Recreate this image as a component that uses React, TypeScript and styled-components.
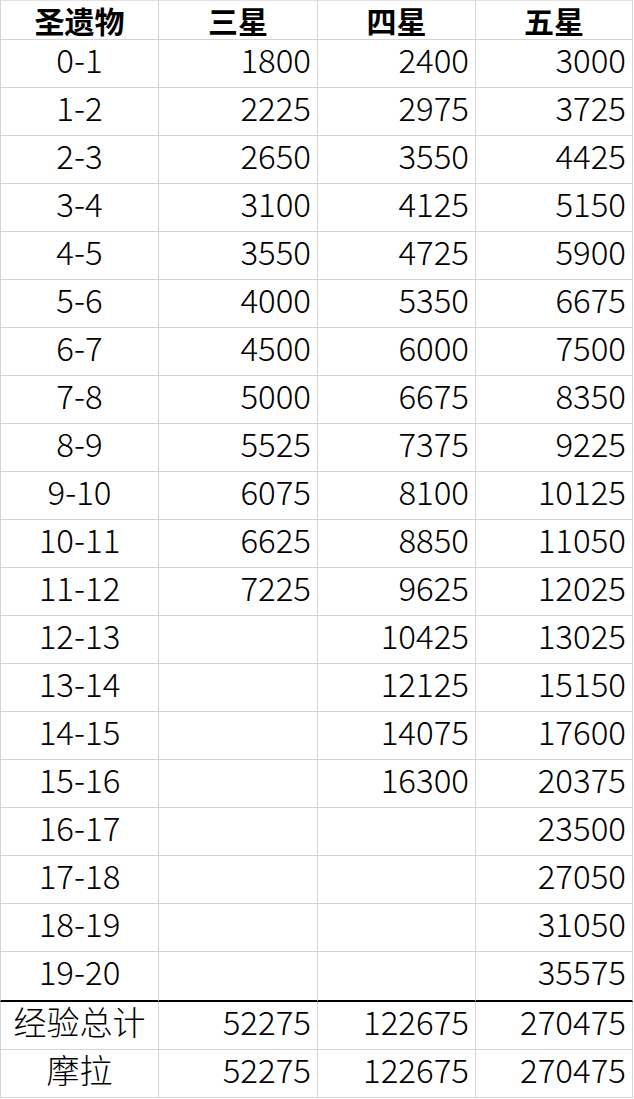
import styled, { createGlobalStyle } from "styled-components";

const GlobalStyle = createGlobalStyle`
  html, body {
    margin: 0;
    padding: 0;
    background: #fff;
  }
  body {
    font-family: "Noto Sans CJK SC", "Noto Sans", sans-serif;
    color: #000;
  }
`;

const Sheet = styled.div`
  display: grid;
  grid-template-columns: 159px 159px 158px 157px;
  width: 634px;
`;

const Cell = styled.div<{ $head?: boolean; $first?: boolean; $edge?: boolean }>`
  box-sizing: border-box;
  height: ${(p) => (p.$head ? 40 : p.$edge ? 50 : 48)}px;
  display: flex;
  align-items: center;
  justify-content: ${(p) => (p.$first || p.$head ? "center" : "flex-end")};
  padding: 0 ${(p) => (p.$first || p.$head ? 0 : 6)}px
    ${(p) => (p.$head ? 0 : p.$edge ? 10 : 8)}px 0;
  border-right: 1px solid #d4d4d4;
  border-left: ${(p) => (p.$first ? "1px solid #d4d4d4" : "none")};
  border-top: ${(p) => (p.$head ? "1px solid #e2e2e2" : "none")};
  border-bottom: ${(p) => (p.$edge ? "2px solid #000" : "1px solid #d4d4d4")};
  font-size: ${(p) => (p.$head ? 30 : 33)}px;
  font-weight: ${(p) => (p.$head ? 700 : 300)};
  line-height: ${(p) => (p.$head ? 1.2 : 1)};
  white-space: nowrap;
`;

const heads = ["圣遗物", "三星", "四星", "五星"];

const rows: [string, string, string, string][] = [
  ["0-1", "1800", "2400", "3000"],
  ["1-2", "2225", "2975", "3725"],
  ["2-3", "2650", "3550", "4425"],
  ["3-4", "3100", "4125", "5150"],
  ["4-5", "3550", "4725", "5900"],
  ["5-6", "4000", "5350", "6675"],
  ["6-7", "4500", "6000", "7500"],
  ["7-8", "5000", "6675", "8350"],
  ["8-9", "5525", "7375", "9225"],
  ["9-10", "6075", "8100", "10125"],
  ["10-11", "6625", "8850", "11050"],
  ["11-12", "7225", "9625", "12025"],
  ["12-13", "", "10425", "13025"],
  ["13-14", "", "12125", "15150"],
  ["14-15", "", "14075", "17600"],
  ["15-16", "", "16300", "20375"],
  ["16-17", "", "", "23500"],
  ["17-18", "", "", "27050"],
  ["18-19", "", "", "31050"],
  ["19-20", "", "", "35575"],
];

const totals: [string, string, string, string][] = [
  ["经验总计", "52275", "122675", "270475"],
  ["摩拉", "52275", "122675", "270475"],
];

export default function App() {
  return (
    <>
      <GlobalStyle />
      <Sheet>
        {heads.map((h, i) => (
          <Cell key={h} $head $first={i === 0}>
            {h}
          </Cell>
        ))}
        {rows.map((r, ri) =>
          r.map((v, ci) => (
            <Cell key={`${ri}-${ci}`} $first={ci === 0} $edge={ri === rows.length - 1}>
              {v}
            </Cell>
          ))
        )}
        {totals.map((r, ri) =>
          r.map((v, ci) => (
            <Cell key={`t${ri}-${ci}`} $first={ci === 0}>
              {v}
            </Cell>
          ))
        )}
      </Sheet>
    </>
  );
}
